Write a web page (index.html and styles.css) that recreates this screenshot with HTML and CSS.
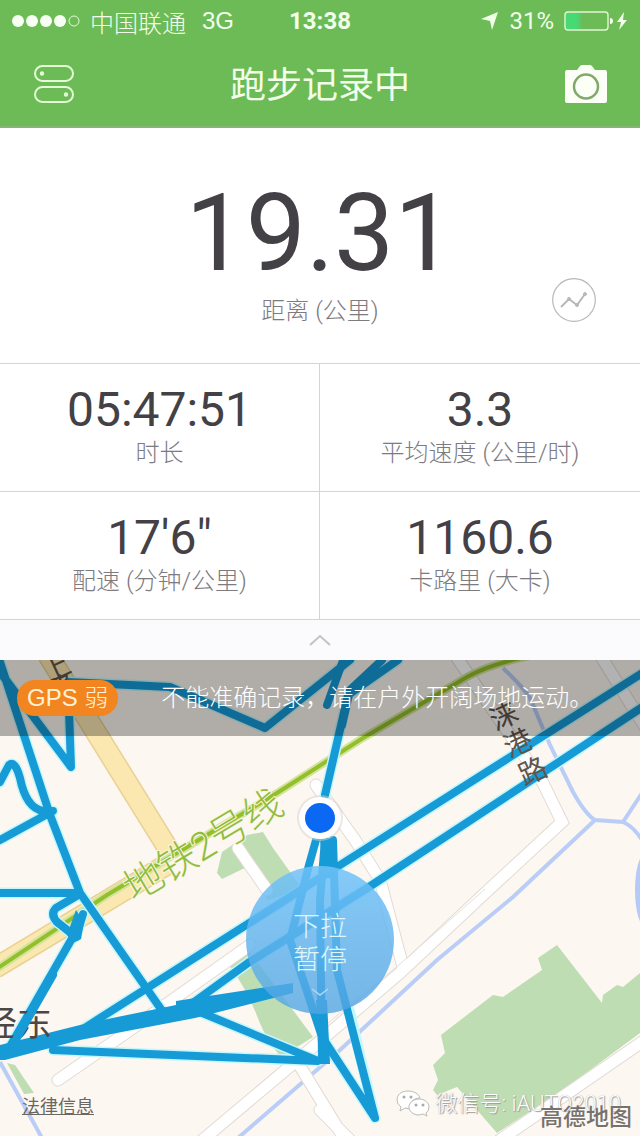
FILE: index.html
```
<!DOCTYPE html>
<html lang="zh-CN">
<head>
    <meta charset="UTF-8">
    <meta name="viewport" content="width=device-width, initial-scale=1.0">
    <title>跑步记录中</title>
    <link rel="stylesheet" href="styles.css">
</head>
<body>
    <header class="top">
        <div class="status-bar">
            <div class="status-left">
                <svg class="signal" width="68" height="14" viewBox="0 0 68 14">
                    <circle cx="6" cy="7" r="6"/>
                    <circle cx="20" cy="7" r="6"/>
                    <circle cx="34" cy="7" r="6"/>
                    <circle cx="48" cy="7" r="6"/>
                    <circle class="signal-empty" cx="62" cy="7" r="5"/>
                </svg>
                <span>中国联通</span>
                <span class="network">3G</span>
            </div>
            <span class="clock">13:38</span>
            <div class="status-right">
                <svg width="18" height="20" viewBox="0 0 18 20"><path d="M17 1 0 8l9 2 2 9z" fill="#f2ffe9"/></svg>
                <span class="percent">31%</span>
                <svg width="64" height="20" viewBox="0 0 64 20">
                    <defs>
                        <linearGradient id="charge">
                            <stop offset="0.6" stop-color="#47d974"/>
                            <stop offset="1" stop-color="#47d974" stop-opacity="0"/>
                        </linearGradient>
                    </defs>
                    <rect x="2" y="2" width="17" height="16" fill="url(#charge)"/>
                    <rect x="1" y="1" width="43" height="18" rx="3" fill="none" stroke="#dff8d2" stroke-width="1.4"/>
                    <path d="M46 7q3 0 3 3t-3 3z" fill="#f2ffe9"/>
                    <path d="M60 1 53 11h4l-2 8 8-10h-4z" fill="#f2ffe9"/>
                </svg>
            </div>
        </div>
        <div class="nav">
            <button class="icon-btn" type="button" aria-label="设置">
                <svg width="42" height="40" viewBox="0 0 42 40" fill="none" stroke="#e4fbd6" stroke-width="2">
                    <rect x="2" y="2" width="38" height="15" rx="7.5"/>
                    <rect x="2" y="23" width="38" height="15" rx="7.5"/>
                    <circle cx="9" cy="9.500" r="1.200"/>
                    <circle cx="33" cy="30.500" r="1.200"/>
                </svg>
            </button>
            <h1>跑步记录中</h1>
            <button class="icon-btn" type="button" aria-label="拍照">
                <svg width="42" height="40" viewBox="0 0 42 40">
                    <path d="M2 6h10l3-4q1-1 2-1h8q1 0 2 1l3 4h10q2 0 2 2v29q0 2-2 2H2q-2 0-2-2V8q0-2 2-2z" fill="#fbfff6"/>
                    <circle cx="21" cy="22.500" r="12" fill="none" stroke="#80a96b" stroke-width="2.500"/>
                </svg>
            </button>
        </div>
    </header>

    <main>
        <section class="distance">
            <p class="distance-value">19.31</p>
            <p class="label">距离 (公里)</p>
            <button class="chart-btn" type="button" aria-label="图表">
                <svg width="44" height="44" viewBox="0 0 44 44" fill="none" stroke="#bab6bb">
                    <circle cx="22" cy="22" r="21.300" stroke-width="1.200"/>
                    <path d="m9 29 8-8 8 6 8-11" stroke-width="2"/>
                    <g fill="#bab6bb"><circle cx="17" cy="21" r="1.500"/><circle cx="25" cy="27" r="1.500"/><circle cx="33" cy="16" r="1.500"/></g>
                </svg>
            </button>
        </section>

        <section class="stats">
            <div class="stat">
                <p class="stat-value">05:47:51</p>
                <p class="label">时长</p>
            </div>
            <div class="stat">
                <p class="stat-value">3.3</p>
                <p class="label">平均速度 (公里/时)</p>
            </div>
            <div class="stat">
                <p class="stat-value">17'6"</p>
                <p class="label">配速 (分钟/公里)</p>
            </div>
            <div class="stat">
                <p class="stat-value">1160.6</p>
                <p class="label">卡路里 (大卡)</p>
            </div>
        </section>

        <button class="collapse" type="button" aria-label="收起">
            <svg width="24" height="14" viewBox="0 0 24 14"><path d="m2 12 10-9 10 9" fill="none" stroke="#c4c2c6" stroke-width="2"/></svg>
        </button>

        <section class="map">
            <svg class="map-canvas" viewBox="0 660 640 476" preserveAspectRatio="xMidYMin slice">
                <!-- parks -->
                <g fill="#bfddb3">
                    <path d="M217 873l5-21 25-17 16-3 10 16 30 42-36 10-14-36-31 15z"/>
                    <path d="M229 965l20-14 64 86-32 20q-14-16-22-36-12-32-30-56z"/>
                    <path d="M7 1063l8 2 19 28-10 1z"/>
                    <path d="M433 1090l5-10-5-15 12-12-4-18 52-40 10 2 39-27-4-12 19-13 45 58 1-8 14-10 6 2 17-14v60l-77 57-66 43-40-46-20 8z"/>
                </g>
                <!-- rivers -->
                <g class="river">
                    <path d="M503 668Q524 688 530 698L550 745 573 792Q586 815 595 820L623 822Q633 826 642 840M623 822 642 793"/>
                    <path d="M595 820 513 897 437 960 340 1050 238 1138"/>
                    <path d="M0 1062 42 1138"/>
                </g>
                <ellipse cx="645" cy="890" rx="10" ry="36" fill="#b5caf8"/>
                <!-- side streets -->
                <g class="street-edge">
                    <path d="M316 785 355 840 380 880 403 967M238 848 267 890M58 1080 123 1035 250 945M298 1063 345 1140M320 1110 350 1140"/>
                    <path d="M200 1142 313 1047 400 973 483 895 562 822 543 783 455 655M600 655 645 727M497 1142 642 1042"/>
                </g>
                <g class="street">
                    <path d="M316 785 355 840 380 880 403 967M238 848 267 890M58 1080 123 1035 250 945M298 1063 345 1140M320 1110 350 1140"/>
                    <path d="M200 1142 313 1047 400 973 483 895 562 822 543 783 455 655M600 655 645 727M497 1142 642 1042"/>
                </g>
                <path d="M322 1028 400 964 485 889" fill="none" stroke="#e8dfda"/>
                <!-- main roads -->
                <path class="road-edge" d="M48 655 172 855M-5 968 168 864"/>
                <path class="road" d="M48 655 172 855M-5 968 168 864"/>
                <!-- metro line -->
                <path class="metro-edge" d="M-5 970 107 895 277 793 363 738 467 677Q490 664 530 656"/>
                <path class="metro" d="M-5 970 107 895 277 793 363 738 467 677Q490 664 530 656"/>
                <text class="metro-name" transform="translate(134 903) rotate(-31)">地铁2号线</text>
                <!-- recorded track -->
                <g class="track-glow">
                    <path d="M0 662 50 815 80 893 163 1012M0 672 71 767 68 682 170 687 265 728 350 660M0 782 9 765Q15 760 20 778 26 808 43 811L53 811 0 840M0 893H78"/>
                    <path d="M80 894 56 908Q50 914 57 922L76 937 83 914M74 935 8 1050M86 1027 337 867 644 672M190 1005 248 963 372 885 644 706"/>
                    <path d="M195 1010 318 1061 53 1050M349 1010 375 1118 324 1040M398 660 348 695 325 795V840"/>
                </g>
                <g class="track">
                    <path d="M0 662 50 815 80 893 163 1012M0 672 71 767 68 682 170 687 265 728 350 660M0 782 9 765Q15 760 20 778 26 808 43 811L53 811 0 840M0 893H78"/>
                    <path d="M80 894 56 908Q50 914 57 922L76 937 83 914M74 935 8 1050M86 1027 337 867 644 672M190 1005 248 963 372 885 644 706"/>
                    <path d="M195 1010 318 1061 53 1050M345 655 327 705M398 660 348 695 325 795M382 660 350 690 342 725M316 840 309 865 290 940 323 1040M333 840 337 970 375 1118 324 1040M325 840 320 900 322 1060"/>
                </g>
                <path d="M0 1045 88 1023 176 1005V1001L293 983V993L195 1018 80 1040 5 1060H0z" fill="#169bd7"/>
                <path d="M76 910 84 922 81 939 73 943 67 935z" fill="#169bd7"/>
                <path d="M320 838h15l2 40h-14zM316 1000h11l3 64h-11z" fill="#169bd7"/>
                <g class="road-name">
                    <text x="42" y="678" transform="rotate(-25 56 668)">上</text>
                    <text x="48" y="698" transform="rotate(-25 62 688)">路</text>
                    <text x="490" y="726" transform="rotate(-25 504 716)">涞</text>
                    <text x="504" y="753" transform="rotate(-25 518 743)">港</text>
                    <text x="519" y="781" transform="rotate(-25 533 771)">路</text>
                </g>
                <text class="district" x="-18" y="1036">经东</text>
                <path class="track" d="M53 975 14 1043"/>
                <circle cx="320" cy="818" r="23" fill="#d9d2cd" opacity="0.500"/>
                <circle cx="320" cy="818" r="21" fill="#fff"/>
                <circle cx="320" cy="818" r="15" fill="#0b68f3"/>
            </svg>

            <div class="notice">
                <span class="gps">GPS 弱</span>
                <span>不能准确记录，请在户外开阔场地运动。</span>
            </div>

            <button class="pause" type="button">
                <span>下拉</span>
                <span>暂停</span>
                <svg width="18" height="10" viewBox="0 0 18 10"><path d="m1 2 8 6 8-6" fill="none" stroke="#a9dcfa" stroke-width="1.500"/></svg>
            </button>

            <a class="legal" href="#">法律信息</a>
            <div class="watermark">
                <svg width="34" height="28" viewBox="0 0 34 28" fill="#fff" stroke="#bdbab4">
                    <path d="M12 1C5 1 1 5 1 10q0 4 4 7l-1 4 5-3 5 1c-1-6 3-11 10-11-1-4-6-7-12-7z"/>
                    <path d="M23 9c-6 0-10 4-10 8s4 8 10 8l4-1 4 2-1-3q3-2 3-6c0-4-4-8-10-8z"/>
                    <g fill="#aaa" stroke="none"><circle cx="8" cy="7" r="1.500"/><circle cx="15" cy="7" r="1.500"/><circle cx="20" cy="15" r="1.500"/><circle cx="27" cy="15" r="1.500"/></g>
                </svg>
                <span>微信号: iAUTO2010</span>
            </div>
            <div class="provider">高德地图</div>
        </section>
    </main>
</body>
</html>
```

FILE: styles.css
```
* {
    box-sizing: border-box;
}
body {
    margin: 0;
    min-height: 100vh;
    display: flex;
    flex-direction: column;
    background: #fff;
    color: #434146;
    font-family: Roboto, "Liberation Sans", "Noto Sans CJK SC", sans-serif;
    font-size: 24px;
}
h1, p {
    margin: 0;
    font-weight: 400;
}
button {
    margin: 0;
    padding: 0;
    border: none;
    background: none;
    font: inherit;
    cursor: pointer;
}
svg {
    display: block;
}

/* header */
.top {
    background: #6cbb57;
    border-bottom: 2px solid #86b475;
    color: #f2ffe9;
}
.status-bar {
    display: grid;
    grid-template-columns: 1fr auto 1fr;
    align-items: center;
    height: 42px;
    padding: 0 12px;
    font-family: "Liberation Sans", "Noto Sans CJK SC", sans-serif;
    font-weight: 300;
}
.status-left, .status-right {
    display: flex;
    align-items: center;
    gap: 10px;
}
.status-right {
    justify-content: flex-end;
}
.signal {
    fill: #f7fff2;
}
.signal-empty {
    fill: none;
    stroke: #e4fbd6;
}
.network {
    margin-left: 6px;
}
.clock {
    font-family: Roboto, sans-serif;
    font-weight: 700;
}
.percent {
    font-family: Roboto, sans-serif;
    font-weight: 400;
}
.nav {
    display: flex;
    align-items: center;
    justify-content: space-between;
    height: 84px;
    padding: 0 33px;
}
.nav h1 {
    padding-top: 4px;
    font-size: 36px;
    line-height: 48px;
    font-weight: 400;
}

/* metrics */
main {
    flex: 1;
    display: flex;
    flex-direction: column;
}
.label {
    color: #7d7a80;
    font-size: 24px;
    line-height: 32px;
    font-weight: 300;
}
.distance {
    position: relative;
    padding: 44px 0 36px;
    border-bottom: 1px solid #d6d3d8;
    text-align: center;
}
.distance-value {
    font-size: 107px;
    line-height: 123px;
}
.chart-btn {
    position: absolute;
    right: 44px;
    bottom: 41px;
}
.stats {
    display: grid;
    grid-template-columns: 1fr 1fr;
}
.stat {
    height: 128px;
    padding-top: 19px;
    border-bottom: 1px solid #d6d3d8;
    text-align: center;
}
.stat:nth-child(odd) {
    border-right: 1px solid #d6d3d8;
}
.stat-value {
    font-size: 48px;
    line-height: 54px;
}
.collapse {
    display: flex;
    align-items: center;
    justify-content: center;
    height: 40px;
    background: #fbfafc;
}

/* map */
.map {
    position: relative;
    flex: 1;
    min-height: 476px;
    overflow: hidden;
    background: #fcf7f1;
}
.map-canvas {
    position: absolute;
    top: 0;
    left: 0;
    width: 100%;
    height: 100%;
}
.river {
    fill: none;
    stroke: #b9cdf6;
    stroke-width: 4;
}
.street, .street-edge {
    fill: none;
    stroke: #fff;
    stroke-width: 11;
    stroke-linecap: round;
}
.street-edge {
    stroke: #e3dad5;
    stroke-width: 13;
}
.road, .road-edge {
    fill: none;
    stroke: #fbe7b0;
    stroke-width: 19;
}
.road-edge {
    stroke: #e8d193;
    stroke-width: 22;
}
.metro, .metro-edge {
    fill: none;
    stroke: #94bf2c;
    stroke-width: 4;
}
.metro-edge {
    stroke: #d2e39a;
    stroke-width: 8;
}
.metro-name {
    fill: #91bc43;
    stroke: #fbf8e4;
    stroke-width: 2;
    paint-order: stroke;
    font-size: 39px;
    font-weight: 300;
}
.road-name {
    fill: #5f554d;
    font-size: 28px;
    font-weight: 400;
}
.district {
    fill: #4c4744;
    font-size: 35px;
    font-weight: 400;
}
.track, .track-glow {
    fill: none;
    stroke: #169bd7;
    stroke-width: 8;
    stroke-linejoin: round;
    stroke-linecap: round;
}
.track-glow {
    stroke: #c4f6fb;
    stroke-width: 11;
}
.notice {
    position: relative;
    display: flex;
    align-items: center;
    gap: 43px;
    height: 76px;
    padding: 0 17px;
    background: rgba(0, 0, 0, 0.3);
    color: #fff;
    font-weight: 300;
    line-height: 36px;
    white-space: nowrap;
}
.gps {
    padding: 0 10px;
    border-radius: 18px;
    background: #f2851f;
    color: #fff1d6;
    font-family: "Liberation Sans", "Noto Sans CJK SC", sans-serif;
}
.pause {
    position: relative;
    display: flex;
    flex-direction: column;
    align-items: center;
    width: 148px;
    height: 148px;
    margin: 130px auto 0;
    padding-top: 45px;
    border-radius: 50%;
    background: linear-gradient(rgba(112, 194, 249, 0.85), rgba(82, 165, 226, 0.8));
    color: #dcf6fc;
    font-size: 27px;
    line-height: 33px;
    font-weight: 300;
}
.pause svg {
    margin-top: 10px;
}
.legal {
    position: absolute;
    left: 22px;
    bottom: 17px;
    color: #6b6763;
    font-size: 18px;
    line-height: 24px;
    font-weight: 400;
}
.watermark {
    position: absolute;
    right: 19px;
    bottom: 16px;
    display: flex;
    align-items: center;
    gap: 5px;
    color: #fff;
    font-size: 22px;
    line-height: 32px;
    font-weight: 300;
    text-shadow: 1px 1px 1px #999, 0 0 1px #aaa;
}
.provider {
    position: absolute;
    right: 8px;
    bottom: 5px;
    color: #77716c;
    font-size: 23px;
    line-height: 26px;
    font-weight: 500;
    text-shadow: 0 0 2px #fff;
}
```
